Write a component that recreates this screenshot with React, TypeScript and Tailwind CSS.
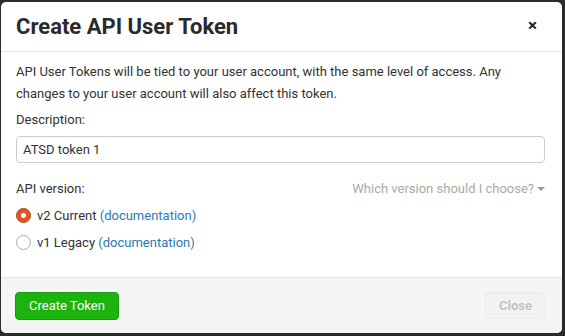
import React from "react";

export default function App() {
  return (
    <div className="w-[565px] h-[336px] bg-[#2b2b2b] pt-[2px] pl-[1px] pr-[3px] pb-[3px]" style={{ fontFamily: "Roboto, 'Noto Sans', sans-serif" }}>
      <div className="h-full bg-white rounded-[5px] overflow-hidden flex flex-col">
        <div className="h-[50px] flex items-center justify-between pl-[15px] pr-[25px] border-b border-[#e5e5e5]">
          <h1 className="text-[22px] font-bold text-[#2a2a2a] leading-none">Create API User Token</h1>
          <span className="text-[#222] text-[17px] font-bold leading-none -mt-[2px]">×</span>
        </div>
        <div className="flex-1 pl-[15px] pr-[17px] pt-[9px] text-[13px] text-[#333] leading-[22px]">
          <p>API User Tokens will be tied to your user account, with the same level of access. Any changes to your user account will also affect this token.</p>
          <div className="mt-[4px]">Description:</div>
          <div className="mt-[5px] h-[27px] border border-[#ccc] rounded-[4px] px-[6px] flex items-center text-[#333]">ATSD token 1</div>
          <div className="mt-[15px] flex justify-between">
            <span>API version:</span>
            <span className="text-[#aaa] flex items-center gap-[3px]">Which version should I choose?<span className="inline-block w-0 h-0 border-x-[4px] border-x-transparent border-t-[4px] border-t-[#999]"></span></span>
          </div>
          <div className="mt-[2px] flex items-center gap-[6px] h-[27px]">
            <span className="w-[15px] h-[15px] rounded-full bg-[#d9582b] border border-[#b9461f] flex items-center justify-center"><span className="w-[5px] h-[5px] rounded-full bg-white"></span></span>
            <span>v2 Current <span className="text-[#2a7ab5]">(documentation)</span></span>
          </div>
          <div className="flex items-center gap-[6px] h-[27px]">
            <span className="w-[15px] h-[15px] rounded-full bg-white border border-[#aaa]"></span>
            <span>v1 Legacy <span className="text-[#2a7ab5]">(documentation)</span></span>
          </div>
        </div>
        <div className="h-[56px] bg-[#f5f5f5] border-t border-[#e5e5e5] flex items-center justify-between pl-[14px] pr-[16px]">
          <button className="h-[28px] px-[13px] rounded-[4px] bg-[#1cb30d] border border-[#179a0a] text-white text-[13px]">Create Token</button>
          <button className="h-[27px] px-[13px] rounded-[4px] bg-[#f2f2f2] border border-[#ebebeb] text-[#c4c4c4] text-[13px] font-bold">Close</button>
        </div>
      </div>
    </div>
  );
}
